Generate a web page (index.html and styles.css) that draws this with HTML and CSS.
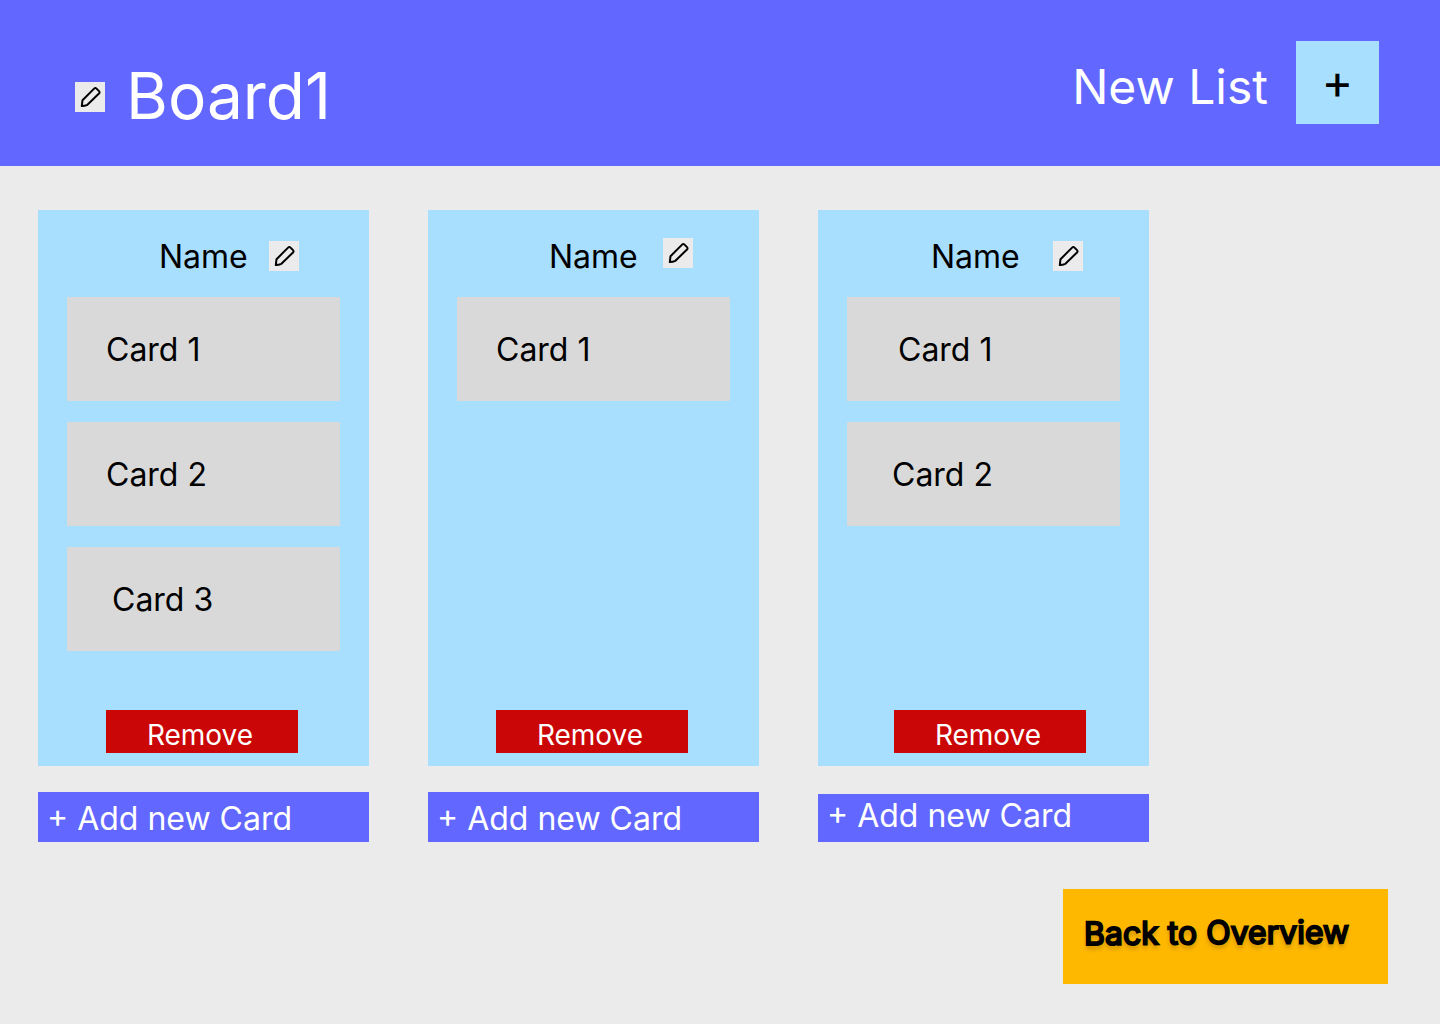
FILE: index.html
```html
<!DOCTYPE html>
<html lang="en">
<head>
<meta charset="utf-8">
<meta name="viewport" content="width=device-width, initial-scale=1">
<title>Board1</title>
<link rel="stylesheet" href="styles.css">
</head>
<body>
<svg class="symbols" aria-hidden="true">
  <symbol id="pencil" viewBox="0 0 30 30">
    <path d="M6.8 24.1 7.5 18.2 19.1 6.6Q20.3 5.4 21.5 6.6L24 9.1Q25.2 10.3 24 11.5L12.4 22.8Q9.8 24 6.8 24.1Z" fill="none" stroke="currentColor" stroke-width="2" stroke-linejoin="round"/>
  </symbol>
</svg>

<header class="topbar">
  <div class="board-title">
    <button class="edit" type="button" aria-label="Rename board"><svg><use href="#pencil"/></svg></button>
    <h1>Board1</h1>
  </div>
  <div class="new-list">
    <label for="new-list">New List</label>
    <button class="new-list-button" id="new-list" type="button">+</button>
  </div>
</header>

<main class="board">
  <section class="column">
    <div class="list">
      <div class="list-header">
        <h2>Name</h2>
        <button class="edit" type="button" aria-label="Rename list"><svg><use href="#pencil"/></svg></button>
      </div>
      <ul class="cards">
        <li class="card">Card 1</li>
        <li class="card">Card 2</li>
        <li class="card card-indented">Card 3</li>
      </ul>
      <button class="remove" type="button">Remove</button>
    </div>
    <button class="add-card" type="button">+ Add new Card</button>
  </section>

  <section class="column">
    <div class="list">
      <div class="list-header list-header-raised">
        <h2>Name</h2>
        <button class="edit" type="button" aria-label="Rename list"><svg><use href="#pencil"/></svg></button>
      </div>
      <ul class="cards">
        <li class="card">Card 1</li>
      </ul>
      <button class="remove" type="button">Remove</button>
    </div>
    <button class="add-card" type="button">+ Add new Card</button>
  </section>

  <section class="column column-last">
    <div class="list">
      <div class="list-header list-header-wide">
        <h2>Name</h2>
        <button class="edit" type="button" aria-label="Rename list"><svg><use href="#pencil"/></svg></button>
      </div>
      <ul class="cards">
        <li class="card card-deep">Card 1</li>
        <li class="card card-indented">Card 2</li>
      </ul>
      <button class="remove" type="button">Remove</button>
    </div>
    <button class="add-card" type="button">+ Add new Card</button>
  </section>
</main>

<footer class="footer">
  <a class="back" href="#"><span>Back to Overview</span></a>
</footer>
</body>
</html>
```
FILE: styles.css
```css
* {
  box-sizing: border-box;
}

body {
  margin: 0;
  background: #ebebeb;
  color: #000;
  font: 32px/40px Inter, sans-serif;
}

h1,
h2,
ul {
  margin: 0;
  padding: 0;
  font: inherit;
  list-style: none;
}

button {
  border: 0;
  padding: 0;
  font: inherit;
  color: inherit;
  cursor: pointer;
}

.symbols {
  position: absolute;
  width: 0;
  height: 0;
}

.edit {
  flex: none;
  width: 30px;
  height: 30px;
  background: #ebebeb;
  color: #000;
}

.edit svg {
  display: block;
  width: 30px;
  height: 30px;
}

.topbar {
  display: flex;
  justify-content: space-between;
  align-items: flex-start;
  padding: 41px 61px 29px 75px;
  background: #6267ff;
  color: #fff;
}

.board-title {
  display: flex;
  align-items: center;
  gap: 21px;
  padding-top: 16px;
}

.board-title h1 {
  font-size: 64px;
  line-height: 78px;
  padding-bottom: 2px;
}

.new-list {
  display: flex;
  align-items: center;
  gap: 28px;
  font-size: 48px;
}

.new-list label {
  padding-top: 8px;
}

.new-list-button {
  width: 83px;
  height: 83px;
  padding-bottom: 2px;
  background: #a8dfff;
  color: #000;
}

.board {
  display: flex;
  gap: 59px;
  padding: 44px 38px 0;
}

.column {
  display: flex;
  flex-direction: column;
  flex: 0 1 331px;
  gap: 26px;
}

.list {
  display: flex;
  flex-direction: column;
  min-height: 556px;
  padding: 27px 29px 13px;
  background: #a8dfff;
}

.list-header {
  display: flex;
  align-items: center;
  gap: 21px;
  height: 40px;
  margin-bottom: 20px;
  padding-left: 92px;
}

.list-header .edit {
  margin-top: -2px;
}

.list-header-raised {
  gap: 25px;
}

.list-header-raised .edit {
  margin-top: -8px;
}

.list-header-wide {
  gap: 33px;
  padding-left: 84px;
}

.cards {
  display: grid;
  gap: 21px;
}

.card {
  padding: 33px 39px 31px;
  background: #d9d9d9;
}

.card-indented {
  padding-left: 45px;
}

.card-deep {
  padding-left: 51px;
}

.remove {
  width: 192px;
  height: 43px;
  margin: auto 0 0 39px;
  padding: 7px 4px 0 0;
  background: #cb0606;
  color: #fff;
  font-size: 28px;
  line-height: 36px;
}

.column-last .remove {
  margin-left: 47px;
}

.add-card {
  height: 50px;
  padding: 3px 9px 0;
  background: #6267ff;
  color: #fff;
  text-align: left;
}

.column-last {
  gap: 28px;
}

.column-last .add-card {
  height: 48px;
  padding: 0 9px 4px;
}

.footer {
  display: flex;
  justify-content: flex-end;
  padding: 47px 52px 40px;
}

.back {
  width: 325px;
  padding: 24px 21px 31px;
  background: #ffb800;
  color: #000;
  text-decoration: none;
  white-space: nowrap;
}

.back span {
  display: inline-block;
  transform: rotate(-0.4deg);
  -webkit-text-stroke: 2px #000;
  text-shadow: 0 4px 4px rgba(0, 0, 0, 0.25);
}
```
